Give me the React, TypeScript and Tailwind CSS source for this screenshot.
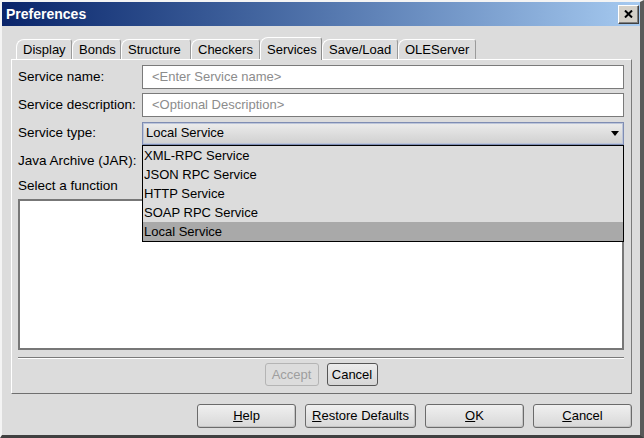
import React from "react";

const tabs = [
  { label: "Display", w: "w-[56px]" },
  { label: "Bonds", w: "w-[49px]" },
  { label: "Structure", w: "w-[70px]" },
  { label: "Checkers", w: "w-[69px]" },
  { label: "Services", w: "w-[62px]", active: true },
  { label: "Save/Load", w: "w-[76px]" },
  { label: "OLEServer", w: "w-[78px]" },
];

const serviceTypes = ["XML-RPC Service", "JSON RPC Service", "HTTP Service", "SOAP RPC Service", "Local Service"];

function DialogButton({ w, children }: { w: string; children: React.ReactNode }) {
  return (
    <button
      className={`${w} h-[24px] flex items-center justify-center rounded-[3px] border border-[#6b6b6b] bg-linear-to-b from-[#f0f0f0] to-[#d8d8d8] shadow-[inset_-1px_-1px_0_#c4c4c4]`}
    >
      {children}
    </button>
  );
}

export default function App() {
  return (
    <div className="w-[644px] h-[438px] flex flex-col overflow-hidden bg-[#dcdcdc] border-l-2 border-t-2 border-r-[4px] border-b-[3px] border-l-[#f4f4f4] border-t-[#f4f4f4] border-r-[#5a5a5a] border-b-[#404040] font-['Liberation_Sans',Arial,sans-serif] text-[13px] text-black">
      {/* Title bar */}
      <div className="h-[24px] shrink-0 flex items-center pl-[4px] pr-[1px] bg-linear-to-r from-[#0a246a] to-[#a6caf0]">
        <span className="text-[14px] font-bold text-white leading-none">Preferences</span>
        <div className="ml-auto w-[21px] h-[19px] flex items-center justify-center bg-[#d4d0c8] border border-l-white border-t-white border-r-[#404040] border-b-[#404040] shadow-[inset_-1px_-1px_0_#808080]">
          <svg width="9" height="8" viewBox="0 0 9 8">
            <path d="M1 0.5 L8 7.5 M8 0.5 L1 7.5" stroke="#000" strokeWidth="2" />
          </svg>
        </div>
      </div>

      {/* Tabs */}
      <div className="mt-[11px] pl-[14px] h-[22px] shrink-0 flex items-end">
        {tabs.map((t) =>
          t.active ? (
            <div
              key={t.label}
              className={`${t.w} h-[23px] -mb-px relative z-10 flex items-start pt-[2px] pl-[6px] bg-[#dcdcdc] border-l border-t border-r border-l-white border-t-white border-r-[#8c8c8c] rounded-tl-[8px] rounded-tr-[3px]`}
            >
              {t.label}
            </div>
          ) : (
            <div
              key={t.label}
              className={`${t.w} h-[20px] flex items-center pl-[6px] border-l border-t border-r border-l-white border-t-white border-r-[#9a9a9a] rounded-tl-[8px] rounded-tr-[3px]`}
            >
              {t.label}
            </div>
          )
        )}
      </div>

      {/* Tab panel */}
      <div className="ml-[9px] mr-[8px] h-[335px] shrink-0 flex flex-col pl-[6px] pr-[7px] pt-[5px] border border-l-white border-t-white border-r-[#7a7a7a] border-b-[#6f6f6f]">
        <div className="h-[24px] flex items-center">
          <span className="w-[124px] text-[13.5px]">Service name:</span>
          <div className="flex-1 h-full flex items-center pl-[9px] bg-white border border-[#7a7a7a] text-[#8c8c8c]">
            &lt;Enter Service name&gt;
          </div>
        </div>
        <div className="mt-[4px] h-[24px] flex items-center">
          <span className="w-[124px] text-[13.5px]">Service description:</span>
          <div className="flex-1 h-full flex items-center pl-[9px] bg-white border border-[#7a7a7a] text-[#8c8c8c]">
            &lt;Optional Description&gt;
          </div>
        </div>
        <div className="mt-[4px] h-[24px] flex items-center relative z-20">
          <span className="w-[124px] text-[13.5px]">Service type:</span>
          <div className="flex-1 h-[23px] flex items-center pl-[3px] border border-[#7f8db3] bg-linear-to-b from-[#ececec] to-[#d0d0d0] shadow-[inset_0_0_0_1px_#bcc5da]">
            <span>Local Service</span>
            <svg className="ml-auto mr-[4px]" width="8" height="5" viewBox="0 0 8 5">
              <polygon points="0,0 8,0 4,5" fill="#000" />
            </svg>
          </div>
          <div className="absolute left-[124px] right-0 top-[24px] bg-[#dcdcdc] border border-black">
            {serviceTypes.map((s) => (
              <div
                key={s}
                className={`h-[19px] leading-[19px] pl-[1px] ${s === "Local Service" ? "bg-[#a9a9a9]" : ""}`}
              >
                {s}
              </div>
            ))}
          </div>
        </div>
        <div className="mt-[4px] h-[24px] flex items-center">
          <span className="w-[124px] text-[13.5px]">Java Archive (JAR):</span>
          <div className="flex-1 h-full" />
        </div>
        <div className="mt-[4px] h-[18px] flex items-center text-[13.5px]">Select a function</div>
        <div className="mt-[4px] h-[151px] bg-white border-2 border-[#777777]" />
        <div className="mt-[7px] h-[2px] border-t border-t-[#7a7a7a] border-b border-b-white" />
        <div className="mt-[4px] flex justify-center gap-[8px]">
          <div className="w-[54px] h-[23px] flex items-center justify-center rounded-[3px] border border-[#b4b4b4] text-[#9e9e9e]">
            Accept
          </div>
          <div className="w-[51px] h-[23px] flex items-center justify-center rounded-[3px] border border-[#555555] bg-linear-to-b from-[#ececec] to-[#d6d6d6]">
            Cancel
          </div>
        </div>
      </div>

      {/* Dialog buttons */}
      <div className="mt-[10px] pr-[8px] flex justify-end gap-[9px]">
        <DialogButton w="w-[99px]">
          <span className="underline">H</span>elp
        </DialogButton>
        <DialogButton w="w-[111px]">
          <span className="underline">R</span>estore Defaults
        </DialogButton>
        <DialogButton w="w-[99px]">
          <span className="underline">O</span>K
        </DialogButton>
        <DialogButton w="w-[99px]">
          <span className="underline">C</span>ancel
        </DialogButton>
      </div>
    </div>
  );
}
